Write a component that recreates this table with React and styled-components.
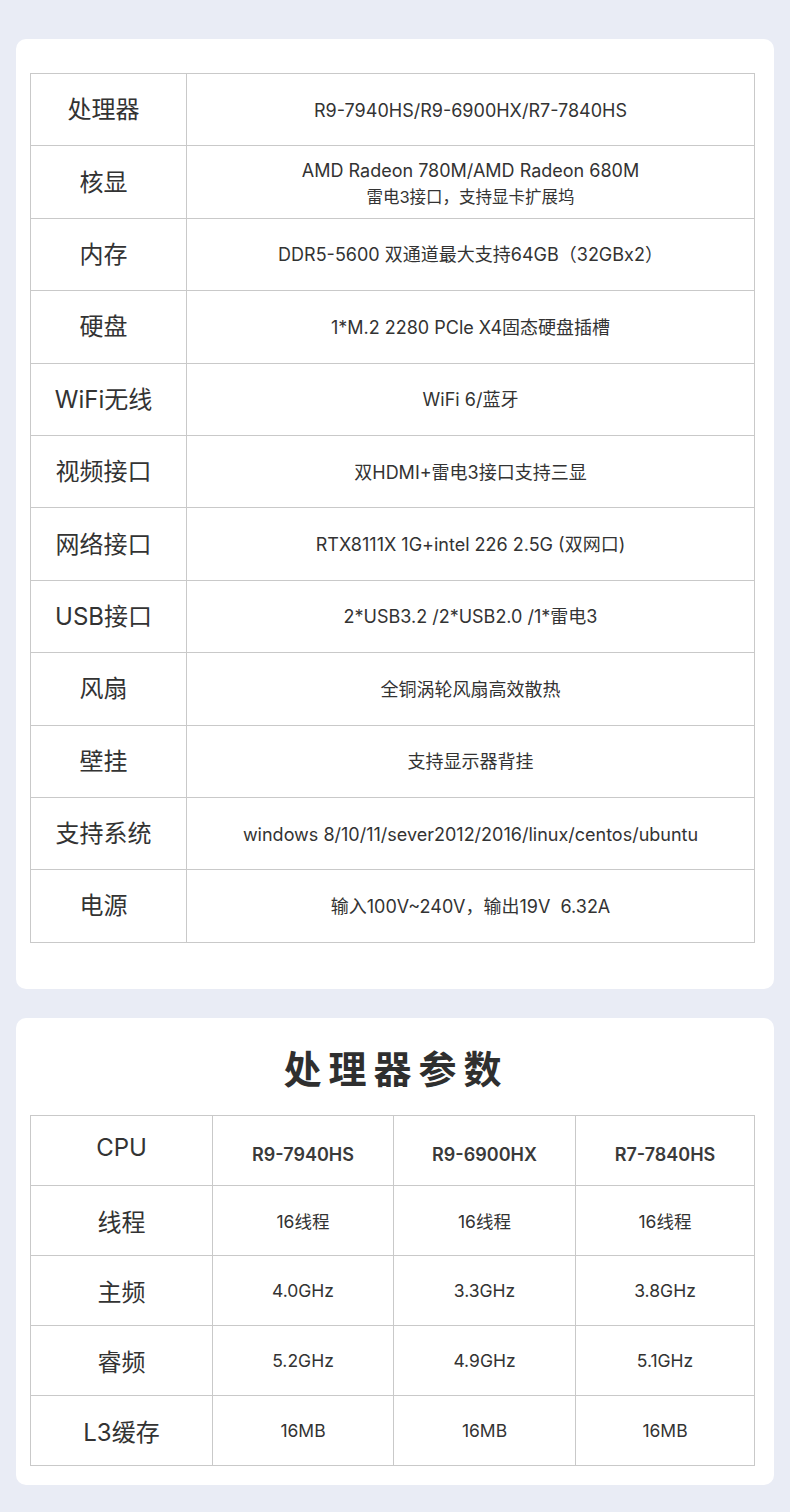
import React from 'react';
import styled, { createGlobalStyle } from 'styled-components';

const GlobalStyle = createGlobalStyle`
  html, body {
    margin: 0;
    padding: 0;
    background: #e9ecf5;
  }
  body {
    font-family: Inter, "Noto Sans CJK SC", sans-serif;
    color: #333;
  }
`;

const Page = styled.div`
  display: flex;
  flex-direction: column;
  gap: 29px;
  padding: 39px 16px 28px;
`;

const Card = styled.div`
  background: #fff;
  border-radius: 10px;
  padding: ${p => p.$pad};
`;

const Title = styled.h2`
  margin: 0 0 20px;
  padding-left: 7px;
  text-align: center;
  font-family: "Noto Sans CJK SC", sans-serif;
  font-size: 38px;
  line-height: 56px;
  font-weight: 700;
  letter-spacing: 7px;
  color: #2f2f2f;
`;

const Table = styled.table`
  width: 725px;
  border-collapse: collapse;
  table-layout: fixed;
`;

const Cell = styled.td`
  border: 1px solid #c9c9c9;
  text-align: center;
  vertical-align: middle;
  padding: 0 4px;
  height: ${p => p.$h}px;
  color: #333;
`;

const Label = styled(Cell)`
  font-size: 24px;
  line-height: 30px;
  padding: 1px 10px 0 0;
`;

const Value = styled(Cell)`
  font-size: 18px;
  line-height: 28px;
  padding-top: 2px;
`;

const SubLine = styled.div`
  font-size: 16.5px;
  line-height: 24px;
`;

const HeadLabel = styled(Cell)`
  font-size: 24px;
  padding-bottom: 6px;
`;

const HeadValue = styled(Cell)`
  font-size: 18px;
  font-weight: 600;
  padding-top: 8px;
  color: #3a3a3a;
`;

const ParamLabel = styled(Cell)`
  font-size: 24px;
`;

const ParamValue = styled(Cell)`
  font-size: 17.5px;
`;

const specs = [
  ['处理器', 'R9-7940HS/R9-6900HX/R7-7840HS'],
  ['核显', 'AMD Radeon 780M/AMD Radeon 680M', '雷电3接口，支持显卡扩展坞'],
  ['内存', 'DDR5-5600 双通道最大支持64GB（32GBx2）'],
  ['硬盘', '1*M.2 2280 PCle X4固态硬盘插槽'],
  ['WiFi无线', 'WiFi 6/蓝牙'],
  ['视频接口', '双HDMI+雷电3接口支持三显'],
  ['网络接口', 'RTX8111X 1G+intel 226 2.5G (双网口)'],
  ['USB接口', '2*USB3.2 /2*USB2.0 /1*雷电3'],
  ['风扇', '全铜涡轮风扇高效散热'],
  ['壁挂', '支持显示器背挂'],
  ['支持系统', 'windows 8/10/11/sever2012/2016/linux/centos/ubuntu'],
  ['电源', '输入100V~240V，输出19V\u00a0 6.32A'],
];

const models = ['R9-7940HS', 'R9-6900HX', 'R7-7840HS'];

const params = [
  ['线程', '16线程', '16线程', '16线程'],
  ['主频', '4.0GHz', '3.3GHz', '3.8GHz'],
  ['睿频', '5.2GHz', '4.9GHz', '5.1GHz'],
  ['L3缓存', '16MB', '16MB', '16MB'],
];

const App = () => (
  <>
    <GlobalStyle />
    <Page>
      <Card $pad="34px 19px 46px 14px">
        <Table>
          <colgroup>
            <col style={{ width: 156 }} />
            <col />
          </colgroup>
          <tbody>
            {specs.map(([label, value, sub]) => (
              <tr key={label}>
                <Label $h={70.4}>{label}</Label>
                <Value $h={69.4}>
                  {value}
                  {sub && <SubLine>{sub}</SubLine>}
                </Value>
              </tr>
            ))}
          </tbody>
        </Table>
      </Card>
      <Card $pad="21px 19px 19px 14px">
        <Title>处理器参数</Title>
        <Table>
          <colgroup>
            <col style={{ width: 182 }} />
            <col style={{ width: 181 }} />
            <col style={{ width: 182 }} />
            <col />
          </colgroup>
          <tbody>
            <tr>
              <HeadLabel $h={63}>CPU</HeadLabel>
              {models.map(m => (
                <HeadValue key={m} $h={61}>{m}</HeadValue>
              ))}
            </tr>
            {params.map(([label, ...vals]) => (
              <tr key={label}>
                <ParamLabel $h={69}>{label}</ParamLabel>
                {vals.map((v, i) => (
                  <ParamValue key={i} $h={69}>{v}</ParamValue>
                ))}
              </tr>
            ))}
          </tbody>
        </Table>
      </Card>
    </Page>
  </>
);

export default App;
